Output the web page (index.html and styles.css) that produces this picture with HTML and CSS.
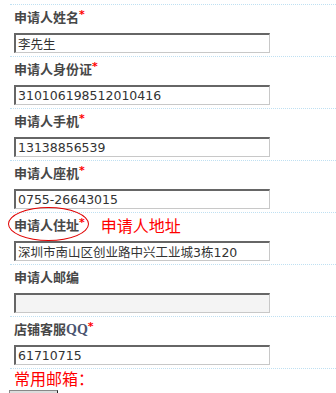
FILE: index.html
```html
<!DOCTYPE html>
<html lang="zh-CN">
<head>
    <meta charset="UTF-8">
    <title>申请人信息</title>
    <link rel="stylesheet" href="styles.css">
</head>
<body>
    <div class="form">
        <div class="row">
            <div class="label">申请人姓名<span class="req">*</span></div>
            <input class="field" type="text" value="李先生">
        </div>
        <div class="row">
            <div class="label">申请人身份证<span class="req">*</span></div>
            <input class="field" type="text" value="310106198512010416">
        </div>
        <div class="row">
            <div class="label">申请人手机<span class="req">*</span></div>
            <input class="field" type="text" value="13138856539">
        </div>
        <div class="row">
            <div class="label">申请人座机<span class="req">*</span></div>
            <input class="field" type="text" value="0755-26643015">
        </div>
        <div class="row marked">
            <div class="label">申请人住址<span class="req">*</span><span class="note">申请人地址</span></div>
            <input class="field" type="text" value="深圳市南山区创业路中兴工业城3栋120">
            <div class="circle"></div>
        </div>
        <div class="row">
            <div class="label">申请人邮编</div>
            <input class="field empty" type="text" value="">
        </div>
        <div class="row">
            <div class="label">店铺客服<span class="latin">QQ</span><span class="req">*</span></div>
            <input class="field" type="text" value="61710715">
        </div>
        <div class="row last">
            <div class="tip">常用邮箱：</div>
            <button class="btn" type="button"></button>
        </div>
    </div>
</body>
</html>
```

FILE: styles.css
```css
html, body {
    height: 393px;
    overflow: hidden;
}

body {
    margin: 0;
    background: #fff;
    font-family: "DejaVu Sans", "Noto Sans CJK SC", sans-serif;
}

.form {
    padding-top: 4px;
}

.row {
    position: relative;
    margin-left: 10px;
    border-top: 1px dotted #bfe0f2;
    padding: 4px 0 3px 4px;
}

.row.last {
    padding-top: 0;
}

.label {
    height: 16px;
    line-height: 16px;
    font-family: "Noto Sans CJK SC", sans-serif;
    font-size: 13px;
    font-weight: 700;
    color: #474747;
    white-space: nowrap;
}

.req {
    color: #ff0000;
    font-family: "DejaVu Sans", sans-serif;
    font-size: 11px;
    vertical-align: top;
    line-height: 12px;
}

.latin {
    font-family: "Liberation Serif", serif;
    font-size: 14px;
    color: #4a5470;
}

.note {
    margin-left: 16px;
    font-weight: 400;
    font-size: 16px;
    color: #ff0000;
    vertical-align: -2px;
}

.field {
    display: block;
    box-sizing: border-box;
    width: 256px;
    height: 20px;
    margin: 8px 0 0;
    padding: 0 2px;
    border-style: solid;
    border-width: 2px 1px 1px 2px;
    border-color: #666 #c8c8c8 #c8c8c8 #666;
    font-family: "DejaVu Sans", "Noto Sans CJK SC", sans-serif;
    font-size: 12.5px;
    color: #333;
    background: #fff;
    outline: none;
}

.field.empty {
    background: #f4f4f4;
}

.circle {
    position: absolute;
    left: -2px;
    top: -6px;
    width: 79px;
    height: 32px;
    border: 1px solid #e00000;
    border-radius: 50%;
}

.tip {
    font-family: "Noto Sans CJK SC", sans-serif;
    font-size: 16px;
    line-height: 18px;
    color: #ff0000;
}

.btn {
    display: block;
    width: 49px;
    height: 22px;
    margin: 3px 0 0 -5px;
    background: #dcdcdc;
    border: 1px solid #333;
    border-color: #888 #222 #222 #888;
}
```
